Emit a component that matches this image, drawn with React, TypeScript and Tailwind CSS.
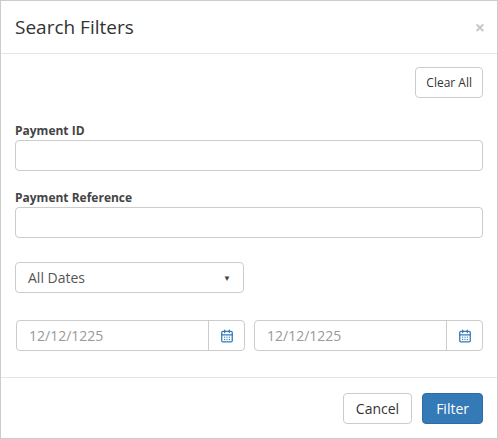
import { CalendarDays } from 'lucide-react';

function DateInput() {
  return (
    <div className="flex flex-1 h-[31px] rounded border border-[#ccc] bg-white">
      <div className="flex-1 flex items-center px-3 text-[14px] text-[#999]">12/12/1225</div>
      <div className="w-[36px] border-l border-[#ccc] flex items-center justify-center">
        <CalendarDays className="h-[14px] w-[14px] text-[#337ab7]" strokeWidth={2.2} />
      </div>
    </div>
  );
}

export default function App() {
  return (
    <div
      className="w-[498px] h-[439px] bg-white border border-[#ccc] flex flex-col text-[#333]"
      style={{ fontFamily: '"Open Sans", sans-serif' }}
    >
      <div className="h-[53px] shrink-0 border-b border-[#e5e5e5] flex items-center justify-between pl-[14px] pr-[12px]">
        <span className="text-[19px]">Search Filters</span>
        <span className="text-[18px] font-bold text-[#c8c8c8] leading-none">×</span>
      </div>
      <div className="flex-1 px-[14px] pt-[13px] flex flex-col border-b border-[#e5e5e5]">
        <div className="flex justify-end">
          <button className="h-[31px] px-[10px] rounded border border-[#ccc] text-[12px]">Clear All</button>
        </div>
        <label className="mt-[24px] text-[12px] font-bold text-[#444] leading-[17px]">Payment ID</label>
        <div className="mt-[1px] h-[31px] rounded border border-[#ccc]" />
        <label className="mt-[18px] text-[12px] font-bold text-[#444] leading-[17px]">Payment Reference</label>
        <div className="mt-[1px] h-[31px] rounded border border-[#ccc]" />
        <div className="mt-[24px] w-[229px] h-[31px] rounded border border-[#ccc] flex items-center justify-between px-3">
          <span className="text-[14px] text-[#555]">All Dates</span>
          <span className="text-[8px] text-[#444]">▼</span>
        </div>
        <div className="mt-[27px] flex gap-[9px] pl-[1px]">
          <DateInput />
          <DateInput />
        </div>
      </div>
      <div className="h-[60px] shrink-0 flex items-center justify-end gap-[10px] px-[14px]">
        <button className="h-[31px] px-[12px] rounded border border-[#ccc] text-[14px]">Cancel</button>
        <button className="h-[31px] px-[13px] rounded bg-[#337ab7] border border-[#2e6da4] text-[14px] text-white">Filter</button>
      </div>
    </div>
  );
}
